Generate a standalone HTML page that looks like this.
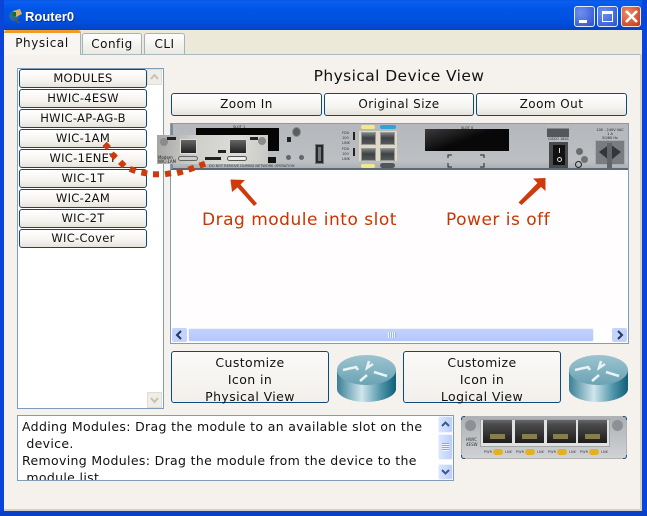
<!DOCTYPE html>
<html><head><meta charset="utf-8"><style>
html,body{margin:0;padding:0;background:#0a3fd0}
#w{position:relative;width:647px;height:516px;overflow:hidden;background:#0a3fd0;font-family:"DejaVu Sans",sans-serif;font-size:12px;color:#111}
#w div{position:absolute;box-sizing:border-box}
.t{white-space:nowrap;text-align:center}
.b{background:linear-gradient(#fff,#f6f4f0 60%,#e6e3dc);border:1px solid #0b4a7a;border-radius:3px;text-align:center;white-space:nowrap;letter-spacing:.3px}
.m{left:19px;width:128px;height:19px;line-height:17px;font-size:11.5px}
.z{top:93px;height:23px;line-height:21px;font-size:12px;letter-spacing:.45px}
.c{top:351px;width:158px;height:52px;line-height:17px;font-size:12.5px;padding-top:2px;background:linear-gradient(#fbfaf8,#f2efeb);letter-spacing:.4px}
.s{background:linear-gradient(90deg,#dbe6fd,#bccffa);border:1px solid #eef3ff;border-radius:2px}
.r{color:#c93400;font-size:17px;white-space:nowrap;letter-spacing:.5px}
.p{width:15px;height:13px;background:linear-gradient(#7d8184,#3d4245 45%,#55595c);border:1px solid #9a9a94}
.tp{width:29px;height:23px;background:linear-gradient(#666 0,#4a4a4a 20%,#1c1c1c)}
.gp{width:15px;height:5px;background:#8a7c4e}
.yl{width:10px;height:6px;background:#e4b01e;border-radius:3px;top:449px}
.lb{top:450px;font-size:3.5px;color:#444;white-space:nowrap}
.cn{width:4px;height:4px}
</style></head><body><div id="w">
<!-- frame -->
<div style="left:0;top:0;width:647px;height:30px;background:linear-gradient(#0a52dc 0,#0a5ef0 4%,#0055e6 30%,#0050e0 70%,#0344c4)"></div>
<div style="left:0;top:0;width:4px;height:516px;background:#0a44d8"></div>
<div style="left:642px;top:0;width:5px;height:516px;background:#0a44d8"></div>
<div style="left:0;top:511px;width:647px;height:5px;background:#0a3fc8"></div>
<div style="left:25px;top:9px;font:bold 13px 'Liberation Sans',sans-serif;color:#fff;text-shadow:1px 1px #0a2f98">Router0</div>
<svg style="position:absolute;left:7px;top:8px" width="16" height="16"><circle cx="7" cy="8" r="5" fill="#2b6d8f"/><path d="M6 3l7-2 2 5-6 3z" fill="#d8b060"/><path d="M6 4h3v4H6z" fill="#1c6a2c"/><path d="M8 11l4 4" stroke="#555" stroke-width="2"/></svg>
<!-- window buttons -->
<div style="left:574px;top:6px;width:21px;height:21px;background:radial-gradient(circle at 30% 30%,#6f90ee,#2a50d0);border:1px solid #e6edff;border-radius:3px"><div style="left:4px;top:13px;width:8px;height:3px;background:#fff"></div></div>
<div style="left:597px;top:6px;width:21px;height:21px;background:radial-gradient(circle at 30% 30%,#6f90ee,#2a50d0);border:1px solid #e6edff;border-radius:3px"><div style="left:4px;top:4px;width:11px;height:11px;border:1px solid #fff;border-top-width:3px"></div></div>
<div style="left:621px;top:6px;width:20px;height:21px;background:radial-gradient(circle at 30% 30%,#ec8a6a,#c83512);border:1px solid #f2e6e0;border-radius:3px"><svg style="position:absolute;left:3px;top:3px" width="13" height="13"><path d="M1 1l11 11M12 1L1 12" stroke="#fff" stroke-width="2.6"/></svg></div>
<!-- client -->
<div style="left:4px;top:30px;width:638px;height:24px;background:#ece9d8"></div>
<div style="left:4px;top:54px;width:638px;height:457px;background:#f5f2ee"></div>
<div style="left:4px;top:54px;width:638px;height:1px;background:#a9b9c2"></div>
<div style="left:4px;top:509px;width:638px;height:2px;background:#d4d0c4"></div>
<div style="left:640px;top:54px;width:2px;height:457px;background:#d4d0c4"></div>
<!-- tabs -->
<div class="t" style="left:82px;top:33px;width:60px;height:21px;line-height:21px;background:linear-gradient(#fff,#ece9e0);border:1px solid #a0b4bc;border-bottom:0;border-radius:3px 3px 0 0;letter-spacing:.5px">Config</div>
<div class="t" style="left:144px;top:33px;width:41px;height:21px;line-height:21px;background:linear-gradient(#fff,#ece9e0);border:1px solid #a0b4bc;border-bottom:0;border-radius:3px 3px 0 0;letter-spacing:.5px">CLI</div>
<div class="t" style="left:4px;top:30px;width:77px;height:25px;background:#f8f6f3;border-top:3px solid #f09a28;border-right:1px solid #a0b4bc;border-radius:3px 3px 0 0;line-height:21px;letter-spacing:.6px">Physical</div>
<!-- list -->
<div style="left:17px;top:68px;width:147px;height:341px;background:#fff;border:1px solid #7f9db9"></div>
<div class="b m" style="top:69px">MODULES</div>
<div class="b m" style="top:89px">HWIC-4ESW</div>
<div class="b m" style="top:109px">HWIC-AP-AG-B</div>
<div class="b m" style="top:129px">WIC-1AM</div>
<div class="b m" style="top:149px">WIC-1ENET</div>
<div class="b m" style="top:169px">WIC-1T</div>
<div class="b m" style="top:189px">WIC-2AM</div>
<div class="b m" style="top:209px">WIC-2T</div>
<div class="b m" style="top:229px">WIC-Cover</div>
<div style="left:147px;top:69px;width:15px;height:16px;background:#efede6;border:1px solid #e0ddd2"><svg width="13" height="14"><path d="M3 9l3.500-4 3.500 4" fill="none" stroke="#c4c2b6" stroke-width="2"/></svg></div>
<div style="left:147px;top:392px;width:15px;height:16px;background:#efede6;border:1px solid #e0ddd2"><svg width="13" height="14"><path d="M3 5l3.500 4 3.500-4" fill="none" stroke="#c4c2b6" stroke-width="2"/></svg></div>
<!-- header -->
<div class="t" style="left:171px;top:67px;width:456px;font-size:15.5px;letter-spacing:.4px;line-height:18px">Physical Device View</div>
<div class="b z" style="left:171px;width:151px">Zoom In</div>
<div class="b z" style="left:324px;width:150px">Original Size</div>
<div class="b z" style="left:476px;width:151px">Zoom Out</div>
<!-- device view -->
<div style="left:170px;top:123px;width:459px;height:221px;background:#fffdfe;border:1px solid #7f9db9"></div>
<div style="left:171px;top:124px;width:457px;height:46px;background:linear-gradient(#b4b8bc,#bcc0c3 85%,#adb1b6);border-bottom:2px solid #5d6a74"></div>
<div style="left:171px;top:124px;width:2px;height:45px;background:#7d8c9c"></div>
<div style="left:196px;top:128px;width:83px;height:23px;background:#050505"></div>
<div style="left:196px;top:151px;width:72px;height:12px;background:#050505"></div>
<div style="left:268px;top:157px;width:8px;height:6px;background:#111"></div>
<div style="left:425px;top:129px;width:84px;height:22px;background:linear-gradient(160deg,#3c3c3c,#080808 50%)"></div>
<div style="left:233px;top:125px;font-size:3.500px;color:#222">SLOT 1</div>
<div style="left:461px;top:126px;font-size:3.500px;color:#222">SLOT 0</div>
<div style="left:209px;top:164px;font-size:3.500px;color:#333">DO NOT REMOVE DURING NETWORK OPERATION</div>
<!-- brackets -->
<svg style="position:absolute;left:447px;top:154px" width="40" height="14"><path d="M5 1H1V4M1 9v4H5M33 1h4V4M37 9v4h-4" fill="none" stroke="#222" stroke-width="1"/></svg>
<!-- center parts -->
<div style="left:292px;top:127px;width:9px;height:10px;border-radius:50%;background:#5d5d5d;border:1px solid #8a8a8a"></div>
<div style="left:287px;top:137px;width:4px;height:5px;background:#222"></div>
<div style="left:286px;top:155px;width:5px;height:5px;border-radius:50%;background:#666"></div>
<div style="left:299px;top:155px;width:5px;height:5px;border-radius:50%;background:#666"></div>
<div style="left:315px;top:144px;width:9px;height:20px;background:#26292b;border:1px solid #777"></div>
<div style="left:318px;top:147px;width:3px;height:14px;background:#777"></div>
<!-- switch ports -->
<div style="left:359px;top:131px;width:38px;height:30px;background:#e0d9c8"></div>
<div class="p" style="left:361px;top:132px"></div>
<div class="p" style="left:380px;top:132px"></div>
<div class="p" style="left:361px;top:148px"></div>
<div class="p" style="left:380px;top:148px"></div>
<div style="left:361px;top:125px;width:14px;height:4px;background:#f3e98c;border-radius:2px"></div>
<div style="left:380px;top:125px;width:16px;height:4px;background:#2fa3d8;border-radius:2px"></div>
<div style="left:361px;top:164px;width:14px;height:4px;background:#f3e98c;border-radius:2px"></div>
<div style="left:380px;top:163px;width:15px;height:5px;background:#555;border-radius:3px"></div>
<div style="left:353px;top:132px;width:2px;height:8px;background:#222"></div>
<div style="left:353px;top:148px;width:2px;height:8px;background:#222"></div>
<div style="left:342px;top:131px;font-size:3.500px;line-height:5px;color:#333">FDX<br>100<br>LINK</div>
<div style="left:342px;top:147px;font-size:3.500px;line-height:5px;color:#333">FDX<br>100<br>LINK</div>
<!-- power -->
<div style="left:547px;top:125px;width:22px;height:12px;background:linear-gradient(#b9bcbf 30%,#55585b 30%);border:0"></div>
<div style="left:548px;top:137px;font-size:3.500px;color:#222">CISCO 1841</div>
<div style="left:549px;top:142px;width:19px;height:26px;background:#4a4a4a"></div>
<div style="left:553px;top:145px;width:12px;height:20px;background:#111"></div>
<div style="left:559px;top:148px;width:1px;height:5px;background:#ddd"></div>
<div style="left:557px;top:157px;width:5px;height:5px;border:1px solid #ddd;border-radius:50%"></div>
<div style="left:576px;top:148px;width:7px;height:7px;border-radius:50%;background:#6b6b6b"></div>
<div style="left:581px;top:156px;width:7px;height:7px;border-radius:50%;background:#6f7375"></div>
<div style="left:575px;top:161px;width:7px;height:7px;border-radius:50%;border:1px solid #222"></div>
<div style="left:595px;top:128px;width:30px;font-size:3.500px;line-height:4px;color:#222;text-align:center">100 - 240V VAC<br>1 A<br>50/60 Hz</div>
<div style="left:595px;top:140px;width:30px;height:25px;background:#7a7d80;border:1px solid #a8acb0"></div>
<svg style="position:absolute;left:596px;top:141px" width="28" height="28"><path d="M3 11L14 3l11 8-11 9z" fill="#33373a"/><path d="M11 2h5v26h-5z" fill="#62666a"/></svg>
<!-- module overlay -->
<div style="left:157px;top:135px;width:111px;height:29px;background:linear-gradient(100deg,#a4a4a4,#cfcfca 35%,#dcdcd8 70%,#c8c8c4);"></div>
<div style="left:180px;top:139px;width:17px;height:15px;background:linear-gradient(#666,#222);border:1px solid #ddd"></div>
<div style="left:229px;top:139px;width:18px;height:15px;background:linear-gradient(#666,#222);border:1px solid #ddd"></div>
<div style="left:160px;top:138px;width:8px;height:8px;border-radius:50%;background:#8b8b8b"></div>
<div style="left:258px;top:137px;width:8px;height:8px;border-radius:50%;background:#8b8b8b"></div>
<div style="left:167px;top:137px;width:9px;height:3px;background:#222"></div>
<div style="left:250px;top:137px;width:8px;height:3px;background:#222"></div>
<div style="left:205px;top:157px;width:16px;height:3px;background:#222"></div>
<div style="left:178px;top:156px;width:20px;height:5px;border:1px solid #666;border-radius:3px;background:#ccc"></div>
<div style="left:227px;top:156px;width:20px;height:5px;border:1px solid #555;border-radius:3px;background:#eee"></div>
<div style="left:218px;top:150px;width:8px;height:3px;background:#222"></div>
<div style="left:158px;top:156px;font-size:4px;color:#222;line-height:4px">Modem<br>WIC-1AM</div>
<!-- dots -->
<svg style="position:absolute;left:0;top:0" width="647" height="230">
<g fill="#cf3a0c"><rect x="103.700" y="143" width="6" height="6" transform="rotate(45 106.700 146)"/>
<rect x="110.700" y="152.700" width="6" height="6" transform="rotate(45 113.700 155.700)"/>
<rect x="119.300" y="161" width="6" height="6" transform="rotate(45 122.300 164)"/>
<rect x="129.700" y="167" width="6" height="6" transform="rotate(20 132.700 170)"/>
<rect x="141.300" y="170" width="6" height="6" transform="rotate(10 144.300 173)"/>
<rect x="153" y="171.300" width="6" height="6"/>
<rect x="165" y="170.700" width="6" height="6" transform="rotate(-10 168 173.700)"/>
<rect x="177" y="169.300" width="6" height="6" transform="rotate(-15 180 172.300)"/>
<rect x="188.300" y="165.700" width="6" height="6" transform="rotate(-20 191.300 168.700)"/>
<rect x="199.300" y="161.700" width="6" height="6" transform="rotate(-20 202.300 164.700)"/></g>
<g fill="#cf3a0c"><path d="M230.500 179.500L245 180l-4.500 4.500L257 203.500 254 206 237.500 187.500 232 192z"/>
<path d="M545.500 178v13L541 187 521.500 205 518.500 202.500 537.500 183 533 178.500z"/></g>
</svg>
<div class="r" style="left:202px;top:209px;line-height:22px">Drag module into slot</div>
<div class="r" style="left:446px;top:209px;line-height:22px">Power is off</div>
<!-- h scrollbar -->
<div style="left:171px;top:327px;width:457px;height:16px;background:#fff"></div>
<div style="left:172px;top:328px;width:15px;height:14px;background:#c4d3fb;border-radius:2px"><svg width="15" height="14"><path d="M9 3L5 7l4 4" fill="none" stroke="#25375f" stroke-width="2"/></svg></div>
<div style="left:612px;top:328px;width:15px;height:14px;background:#c4d3fb;border-radius:2px"><svg width="15" height="14"><path d="M6 3l4 4-4 4" fill="none" stroke="#25375f" stroke-width="2"/></svg></div>
<div style="left:188px;top:328px;width:406px;height:14px;background:linear-gradient(#c3d3fc,#b2c7fa);border:1px solid #eef3ff;border-radius:2px"></div>
<div style="left:388px;top:332px;width:8px;height:6px;background:repeating-linear-gradient(90deg,#eef3ff 0 1px,#9cb3ee 1px 2px)"></div>
<!-- customize -->
<div class="b c" style="left:171px">Customize<br>Icon in<br>Physical View</div>
<div class="b c" style="left:403px">Customize<br>Icon in<br>Logical View</div>
<!-- routers -->
<svg style="position:absolute;left:336px;top:353px" width="62" height="52"><defs><linearGradient id="g" x1="0" x2="1" y1="0" y2="0"><stop offset="0" stop-color="#3a7f95"/><stop offset=".42" stop-color="#cfe6ec"/><stop offset=".75" stop-color="#4f93a8"/><stop offset="1" stop-color="#0f6078"/></linearGradient><linearGradient id="h" x1="0" x2="0" y1="0" y2="1"><stop offset="0" stop-color="#9cc4cf"/><stop offset="1" stop-color="#6ba3b4"/></linearGradient></defs>
<path d="M1 17v19c0 7 13 13 29 13s30-6 30-13V17z" fill="url(#g)"/><ellipse cx="30.500" cy="17" rx="29.500" ry="15" fill="url(#h)"/><path d="M7 17l13-3 2 3M24 28l7-6M33 8l-2 7 6-4M38 19l13 4" fill="none" stroke="#e8f3f6" stroke-width="2.500"/></svg>
<svg style="position:absolute;left:568px;top:353px" width="62" height="52"><path d="M1 17v19c0 7 13 13 29 13s30-6 30-13V17z" fill="url(#g)"/><ellipse cx="30.500" cy="17" rx="29.500" ry="15" fill="url(#h)"/><path d="M7 17l13-3 2 3M24 28l7-6M33 8l-2 7 6-4M38 19l13 4" fill="none" stroke="#e8f3f6" stroke-width="2.500"/></svg>
<!-- text area -->
<div style="left:17px;top:415px;width:437px;height:66px;background:#fff;border:1px solid #7f9db9;overflow:hidden"><div style="left:4px;top:2px;width:420px;line-height:17px;font-size:12.5px;white-space:nowrap;letter-spacing:.34px">Adding Modules: Drag the module to an available slot on the<br>&nbsp;device.<br>Removing Modules: Drag the module from the device to the<br>&nbsp;module list</div></div>
<div class="s" style="left:438px;top:416px;width:15px;height:17px"><svg width="13" height="15"><path d="M3 9l3.500-3.500L10 9" fill="none" stroke="#3b5a8f" stroke-width="2"/></svg></div>
<div class="s" style="left:438px;top:434px;width:15px;height:26px"></div>
<div style="left:442px;top:443px;width:7px;height:8px;background:repeating-linear-gradient(#8fa9e8 0 1px,#eef3ff 1px 2px)"></div>
<div class="s" style="left:438px;top:464px;width:15px;height:16px"><svg width="13" height="14"><path d="M3 5l3.500 3.500L10 5" fill="none" stroke="#3b5a8f" stroke-width="2"/></svg></div>
<!-- module thumb -->
<div style="left:461px;top:416px;width:166px;height:43px;background:linear-gradient(#adb1b5,#d0d2d4);border:1px solid #b0b3b6;border-radius:3px"></div>
<div class="cn" style="left:461px;top:416px;border-left:1px solid #1a4f80;border-top:1px solid #1a4f80;border-radius:3px 0 0 0"></div>
<div class="cn" style="left:623px;top:416px;border-right:1px solid #1a4f80;border-top:1px solid #1a4f80;border-radius:0 3px 0 0"></div>
<div class="cn" style="left:461px;top:455px;border-left:1px solid #1a4f80;border-bottom:1px solid #1a4f80;border-radius:0 0 0 3px"></div>
<div class="cn" style="left:623px;top:455px;border-right:1px solid #1a4f80;border-bottom:1px solid #1a4f80;border-radius:0 0 3px 0"></div>
<div style="left:465px;top:420px;width:11px;height:11px;border-radius:50%;background:#8d9094"></div>
<div style="left:612px;top:420px;width:11px;height:11px;border-radius:50%;background:#8d9094"></div>
<div style="left:480px;top:419px;width:130px;height:28px;background:#dfe1e2;border:1px solid #a5a5a5"></div>
<div class="tp" style="left:483px;top:420px"></div>
<div class="tp" style="left:515px;top:420px"></div>
<div class="tp" style="left:547px;top:420px"></div>
<div class="tp" style="left:578px;top:420px"></div>
<div class="gp" style="left:490px;top:434px"></div>
<div class="gp" style="left:522px;top:434px"></div>
<div class="gp" style="left:553px;top:434px"></div>
<div class="gp" style="left:585px;top:434px"></div>
<div class="yl" style="left:493px"></div>
<div class="yl" style="left:525px"></div>
<div class="yl" style="left:557px"></div>
<div class="yl" style="left:589px"></div>
<div class="lb" style="left:484px">PWR</div><div class="lb" style="left:505px">LNK</div>
<div class="lb" style="left:516px">PWR</div><div class="lb" style="left:537px">LNK</div>
<div class="lb" style="left:548px">PWR</div><div class="lb" style="left:569px">LNK</div>
<div class="lb" style="left:580px">PWR</div><div class="lb" style="left:601px">LNK</div>
<div style="left:466px;top:438px;font-size:4px;line-height:4.500px;color:#333">HWIC<br>4ESW</div>
</div></body></html>
